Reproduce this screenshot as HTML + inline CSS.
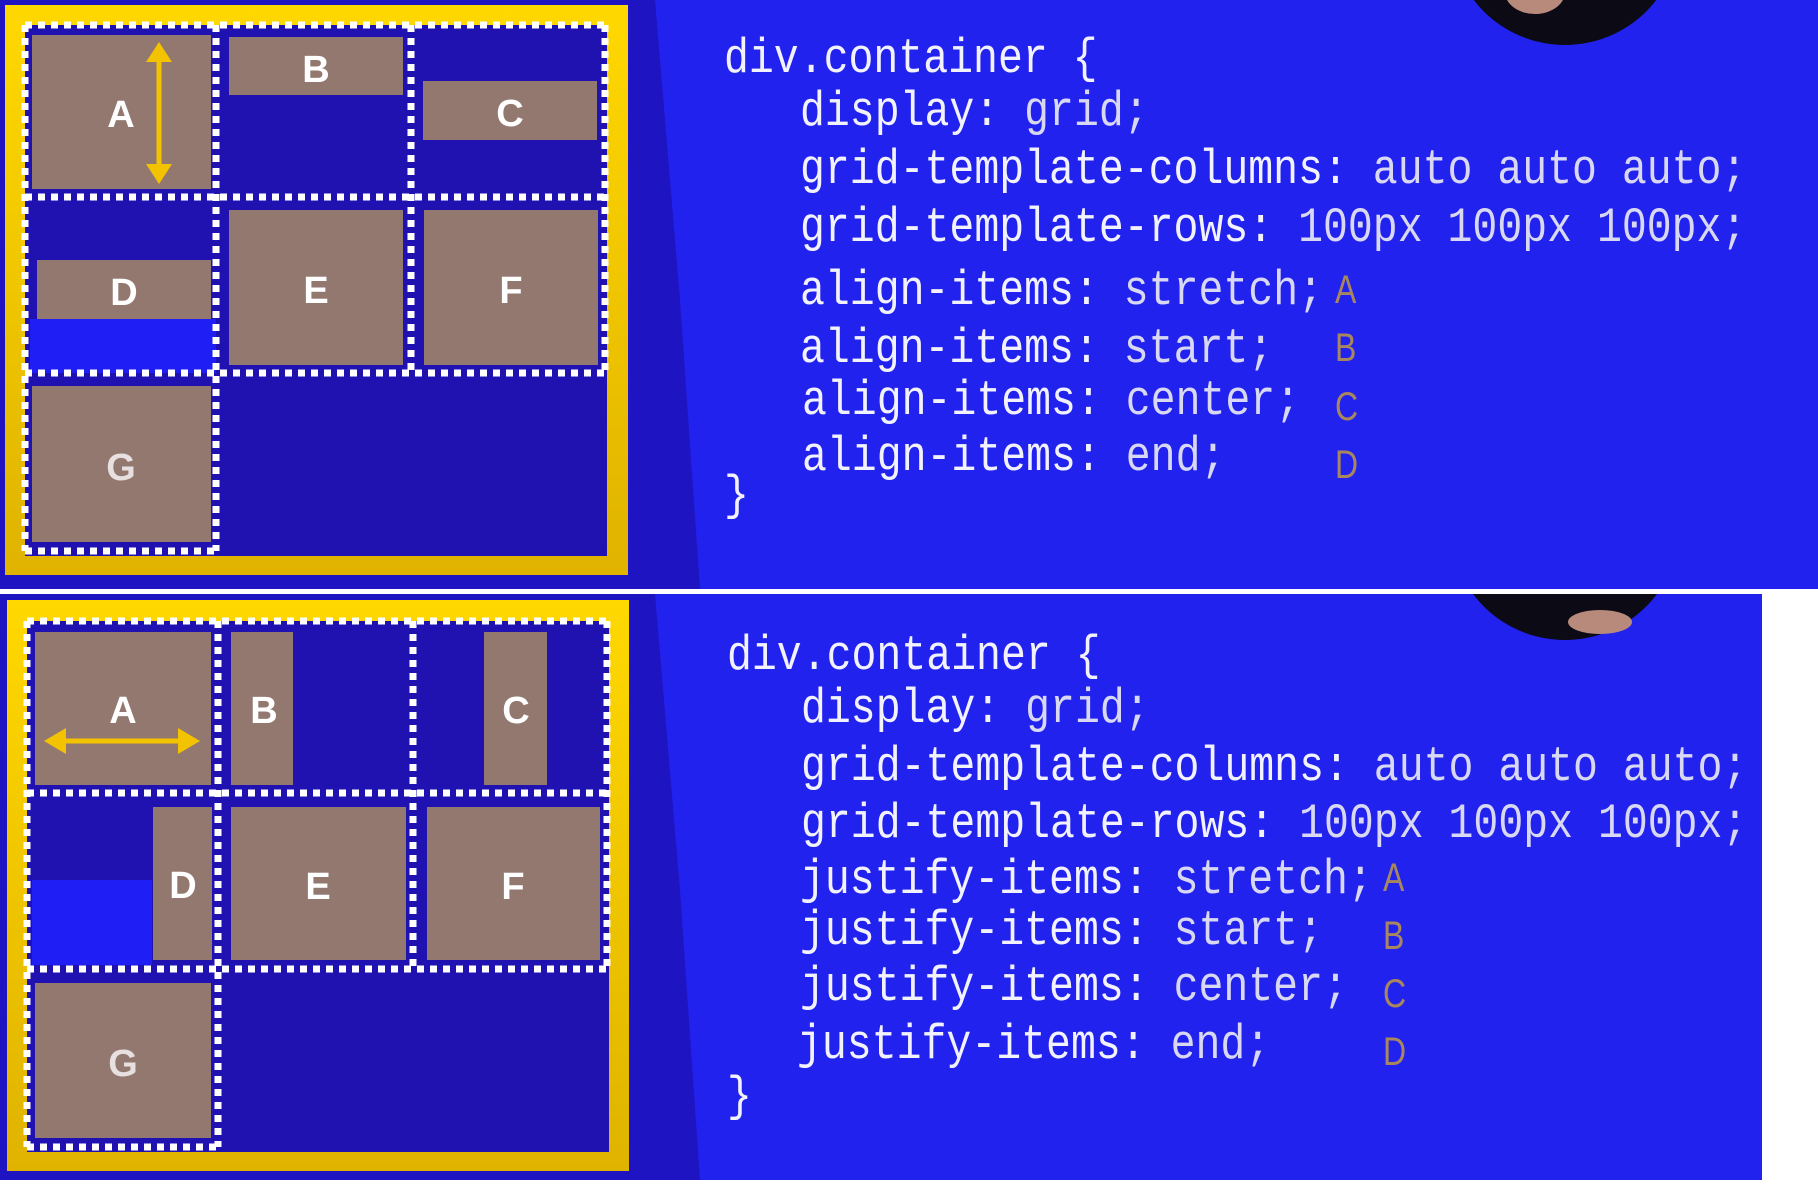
<!DOCTYPE html>
<html><head><meta charset="utf-8"><style>
html,body{margin:0;padding:0}
body{width:1818px;height:1194px;position:relative;overflow:hidden;background:#fff;font-family:"Liberation Sans",sans-serif}
.code{position:absolute;font-family:"Liberation Mono",monospace;font-size:41.5px;color:#f2f2ff;white-space:pre;line-height:1;transform-origin:0 100%;transform:scaleY(1.18)}
.code .v{color:#d8d8f4}
.lt{position:absolute;font-family:"Liberation Sans",sans-serif;font-size:40px;color:#a9875e;line-height:1;transform-origin:0 100%;transform:scaleX(0.8)}
</style></head><body>
<svg width="1818" height="1194" style="position:absolute;left:0;top:0">
<defs>
<linearGradient id="y" x1="0" y1="0" x2="0" y2="1"><stop offset="0" stop-color="#ffd800"/><stop offset="1" stop-color="#dfb300"/></linearGradient>
</defs>
<rect x="0" y="0" width="1818" height="589" fill="#2222ee"/>
<polygon points="0,0 655,0 680,300 700,589 0,589" fill="#1f14c2"/>
<rect x="0" y="594" width="1762" height="586" fill="#2222ee"/>
<polygon points="0,594 655,594 680,890 700,1180 0,1180" fill="#1f14c2"/>
<clipPath id="c1"><rect x="0" y="0" width="1818" height="589"/></clipPath>
<circle cx="1565" cy="-70" r="115" fill="#0c0a14" clip-path="url(#c1)"/>
<ellipse cx="1535" cy="-8" rx="30" ry="22" fill="#b88a7c" clip-path="url(#c1)"/>
<clipPath id="c2"><rect x="0" y="594" width="1762" height="586"/></clipPath>
<circle cx="1565" cy="525" r="115" fill="#0c0a14" clip-path="url(#c2)"/>
<ellipse cx="1600" cy="622" rx="32" ry="12" fill="#b88a7c" clip-path="url(#c2)"/>

<rect x="5" y="5" width="623" height="570" fill="url(#y)"/>
<rect x="25" y="25" width="582" height="531" fill="#2012b0"/>
<rect x="30" y="319" width="186" height="54" fill="#1f1ff5"/>
<g fill="#937870">
<rect x="32" y="35" width="179" height="154"/>
<rect x="229" y="37" width="174" height="58"/>
<rect x="423" y="81" width="174" height="59"/>
<rect x="37" y="260" width="174" height="59"/>
<rect x="229" y="210" width="174" height="155"/>
<rect x="424" y="210" width="174" height="155"/>
<rect x="32" y="386" width="179" height="156"/>
</g>
<g stroke="#fff" stroke-width="7" stroke-dasharray="7 6" fill="none">
<path d="M25 25V551M216 25V551M411 25V373M605 25V373M25 25H605M25 197H605M25 373H605M25 551H216"/>
</g>
<g fill="#f3c200" stroke="#f3c200">
<line x1="159" y1="58" x2="159" y2="168" stroke-width="5"/>
<polygon points="146,62 172,62 159,42" stroke="none"/>
<polygon points="146,164 172,164 159,184" stroke="none"/>
</g>
<g fill="#fff" font-family="Liberation Sans" font-weight="bold" font-size="38" text-anchor="middle">
<text x="121" y="127">A</text><text x="316" y="82">B</text><text x="510" y="126">C</text>
<text x="124" y="305">D</text><text x="316" y="303">E</text><text x="511" y="303">F</text>
<text x="121" y="480" fill="#e8e0e0">G</text>
</g>

<rect x="7" y="600" width="622" height="571" fill="url(#y)"/>
<rect x="27" y="621" width="582" height="531" fill="#2012b0"/>
<rect x="32" y="880" width="120" height="85" fill="#1f1ff5"/>
<g fill="#937870">
<rect x="35" y="632" width="176" height="153"/>
<rect x="231" y="632" width="62" height="153"/>
<rect x="484" y="632" width="63" height="153"/>
<rect x="153" y="807" width="59" height="153"/>
<rect x="231" y="807" width="175" height="153"/>
<rect x="427" y="807" width="173" height="153"/>
<rect x="35" y="983" width="176" height="155"/>
</g>
<g stroke="#fff" stroke-width="7" stroke-dasharray="7 6" fill="none">
<path d="M27 621V1147M218 621V1147M413 621V969M607 621V969M27 621H607M27 793H607M27 969H607M27 1147H218"/>
</g>
<g fill="#f3c200" stroke="#f3c200">
<line x1="62" y1="741" x2="182" y2="741" stroke-width="5"/>
<polygon points="66,728 66,754 44,741" stroke="none"/>
<polygon points="178,728 178,754 200,741" stroke="none"/>
</g>
<g fill="#fff" font-family="Liberation Sans" font-weight="bold" font-size="38" text-anchor="middle">
<text x="123" y="723">A</text><text x="264" y="723">B</text><text x="516" y="723">C</text>
<text x="183" y="898">D</text><text x="318" y="899">E</text><text x="513" y="899">F</text>
<text x="123" y="1076" fill="#e8e0e0">G</text>
</g>
</svg>

<div class="code" style="left:724px;top:43px">div.container {</div>
<div class="code" style="left:800px;top:96px">display: <span class="v">grid;</span></div>
<div class="code" style="left:800px;top:154px">grid-template-columns: <span class="v">auto auto auto;</span></div>
<div class="code" style="left:800px;top:212px">grid-template-rows: <span class="v">100px 100px 100px;</span></div>
<div class="code" style="left:800px;top:275px">align-items: <span class="v">stretch;</span></div>
<div class="code" style="left:800px;top:333px">align-items: <span class="v">start;</span></div>
<div class="code" style="left:802px;top:385px">align-items: <span class="v">center;</span></div>
<div class="code" style="left:802px;top:441px">align-items: <span class="v">end;</span></div>
<div class="code" style="left:724px;top:480px">}</div>
<div class="lt" style="left:1335px;top:270px">A</div>
<div class="lt" style="left:1335px;top:328px">B</div>
<div class="lt" style="left:1335px;top:387px">C</div>
<div class="lt" style="left:1335px;top:445px">D</div>

<div class="code" style="left:727px;top:640px">div.container {</div>
<div class="code" style="left:801px;top:693px">display: <span class="v">grid;</span></div>
<div class="code" style="left:801px;top:751px">grid-template-columns: <span class="v">auto auto auto;</span></div>
<div class="code" style="left:801px;top:808px">grid-template-rows: <span class="v">100px 100px 100px;</span></div>
<div class="code" style="left:800px;top:864px">justify-items: <span class="v">stretch;</span></div>
<div class="code" style="left:800px;top:915px">justify-items: <span class="v">start;</span></div>
<div class="code" style="left:800px;top:971px">justify-items: <span class="v">center;</span></div>
<div class="code" style="left:797px;top:1029px">justify-items: <span class="v">end;</span></div>
<div class="code" style="left:727px;top:1081px">}</div>
<div class="lt" style="left:1383px;top:858px">A</div>
<div class="lt" style="left:1383px;top:916px">B</div>
<div class="lt" style="left:1383px;top:974px">C</div>
<div class="lt" style="left:1383px;top:1032px">D</div>
</body></html>
